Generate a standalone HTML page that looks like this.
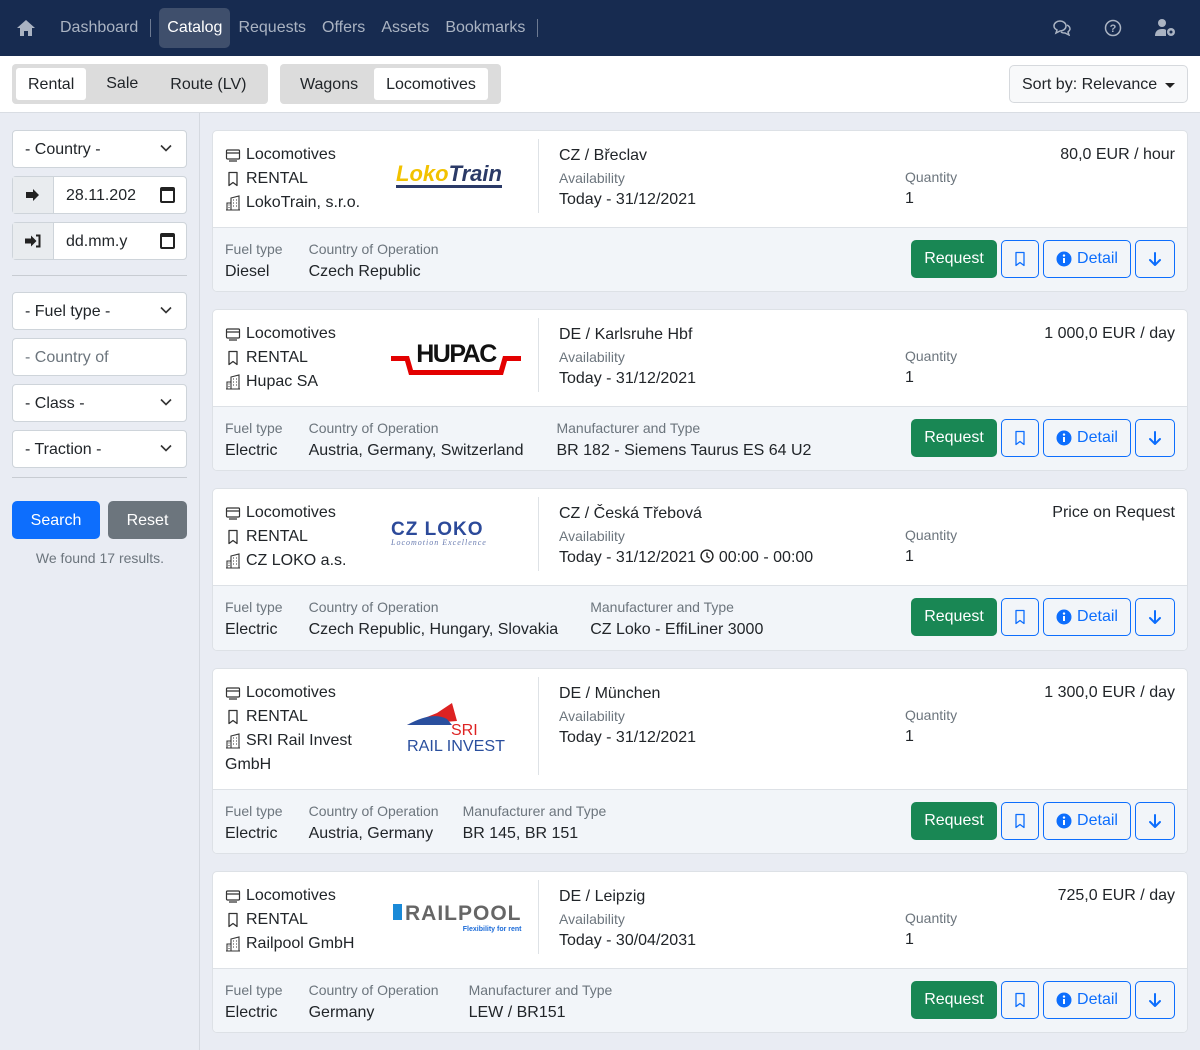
<!DOCTYPE html>
<html><head><meta charset="utf-8"><style>
*{box-sizing:border-box;margin:0;padding:0}
body{width:1200px;height:1050px;overflow:hidden;background:#e9ecf3;font-family:"Liberation Sans",Arial,sans-serif;color:#212529;font-size:16px}
.nav{height:56px;background:#172b50;display:flex;align-items:center;padding-left:16px;color:#aab3c2}
.nav .it{padding:0 8px;font-size:16px;line-height:40px}
.nav .act{background:#3f4f6c;color:#fff;border-radius:5px}
.sep{width:1px;height:18px;background:#6d7a92;margin:0 4px}
.tb{height:57px;background:#fff;border-bottom:1px solid #d9dde3;position:relative}
.grp{position:absolute;top:8px;height:40px;background:#dcdcdc;border-radius:4px;display:flex;padding:4px;gap:0}
.grp span{padding:0 12px;line-height:32px;border-radius:3px;font-size:16px;padding-top:1px}
.grp .on{background:#fff}
.sort{position:absolute;right:12px;top:9px;width:179px;height:38px;border:1px solid #d6d9dd;border-radius:5px;background:#f8f9fa;line-height:37px;padding-left:12px}
.side{position:absolute;left:0;top:113px;width:200px;height:937px;border-right:1px solid #d5d9e0}
.f{position:absolute;left:12px;width:175px;height:38px;background:#fff;border:1px solid #ced4da;border-radius:4px;line-height:37px;padding-left:12px}
.chev{position:absolute;right:14px;top:13px}
.hr{position:absolute;left:12px;width:175px;height:1px;background:#c8ccd2}
.ib{position:absolute;left:0;top:0;width:41px;height:36px;background:#e9ecef;border-right:1px solid #ced4da;display:flex;align-items:center;justify-content:center}
.cal{position:absolute;right:11px;top:10px;width:15px;height:16px;border:2px solid #222;border-top-width:4px;border-radius:2px}
.card{position:absolute;left:212px;width:976px;background:#fff;border:1px solid #dde1e6;border-radius:5px;overflow:hidden}
.top{position:relative}
.bot{background:#f2f5f9;border-top:1px solid #dde1e6;height:65px;position:relative}
.l{position:absolute;left:12px;top:12px;line-height:24px}
.l div{display:flex;align-items:center;gap:5px}
.vd{position:absolute;left:325px;top:8px;width:1px;background:#dee2e6}
.r{position:absolute;left:346px;top:13px}
.g{color:#6c757d;font-size:14px}
.q{position:absolute;left:692px;top:12px}
.pr{position:absolute;right:12px;top:15px}
.dets{position:absolute;left:12px;top:11px;display:flex;gap:26px}
.dets .g{line-height:20px}.dets div div:last-child{line-height:24px;margin-top:1px}
.btns{position:absolute;right:12px;top:12px;display:flex;gap:4px}
.b{height:38px;border:1px solid #0d6efd;border-radius:5px;color:#0d6efd;display:flex;align-items:center;justify-content:center;gap:5px}
.req{background:#198754;border-color:#198754;color:#fff;width:86px}
</style></head><body>
<svg width="0" height="0" style="position:absolute"><defs>
<symbol id="loc" viewBox="0 0 16 16"><g fill="none" stroke="#333" stroke-width="1.2"><rect x="1.5" y="3" width="13" height="9" rx="1"/><path d="M1.5 6h13M4 14h8"/></g></symbol>
<symbol id="bm" viewBox="0 0 16 16"><path d="M4 1.5h8v13l-4-3-4 3z" fill="none" stroke="currentColor" stroke-width="1.3" stroke-linejoin="round"/></symbol>
<symbol id="bld" viewBox="0 0 16 16"><g fill="none" stroke="#333" stroke-width="1.1"><path d="M1 15h14M2 15V8h4v7M6 15V3l8-2v14"/><path d="M8 5h1M11 5h1M8 8h1M11 8h1M8 11h1M11 11h1M3.5 10h1M3.5 12.5h1"/></g></symbol>
<symbol id="inf" viewBox="0 0 16 16"><circle cx="8" cy="8" r="7.5" fill="#0d6efd"/><rect x="7" y="7" width="2" height="5" fill="#fff"/><circle cx="8" cy="4.6" r="1.2" fill="#fff"/></symbol>
<symbol id="dn" viewBox="0 0 16 16"><path d="M8 2v12M3 9l5 5 5-5" fill="none" stroke="#0d6efd" stroke-width="2" stroke-linecap="round" stroke-linejoin="round"/></symbol>
<symbol id="ch" viewBox="0 0 12 8"><path d="M1 1.5l5 5 5-5" fill="none" stroke="#333" stroke-width="1.6"/></symbol>
</defs></svg>
<div class="nav">
<svg width="20" height="18" viewBox="0 0 20 18"><path d="M10 1L1 9h3v8h4v-5h4v5h4V9h3z" fill="#aab3c2"/></svg>
<span style="width:16px"></span><span class="it">Dashboard</span><span class="sep"></span>
<span class="it act" style="margin-left:4px">Catalog</span><span class="it">Requests</span><span class="it">Offers</span><span class="it">Assets</span><span class="it">Bookmarks</span><span class="sep"></span>
<svg style="position:absolute;left:1052px;top:19px" width="20" height="17" viewBox="0 0 20 17" fill="none" stroke="#aab3c2" stroke-width="1.5"><path d="M2 7c0-3 3-5 6-5s6 2 6 5-3 5-6 5l-4 2 1-3C3 10 2 9 2 7z"/><path d="M15 6c2 1 3 2 3 4 0 1-1 2-2 3l1 3-4-2c-1 0-3 0-4-1"/></svg>
<svg style="position:absolute;left:1104px;top:19px" width="18" height="18" viewBox="0 0 18 18"><circle cx="9" cy="9" r="7.5" fill="none" stroke="#aab3c2" stroke-width="1.5"/><text x="9" y="13" font-size="11" font-weight="bold" text-anchor="middle" fill="#aab3c2" font-family="Liberation Sans">?</text></svg>
<svg style="position:absolute;left:1155px;top:18px" width="22" height="19" viewBox="0 0 22 19" fill="#aab3c2"><circle cx="7" cy="5" r="4"/><path d="M0 18c0-5 3-7 7-7 2 0 3 0 4 1v6z"/><circle cx="16" cy="14" r="4"/><circle cx="16" cy="14" r="1.5" fill="#172b50"/></svg>
</div>
<div class="tb">
<div class="grp" style="left:12px;width:256px"><span class="on">Rental</span><span style="padding:0 20px">Sale</span><span>Route (LV)</span></div>
<div class="grp" style="left:280px;width:221px"><span style="padding:0 16px;padding-top:1px">Wagons</span><span class="on">Locomotives</span></div>
<div class="sort">Sort by: Relevance <span style="position:absolute;right:12px;top:17px;border:5px solid transparent;border-top:5px solid #222;border-bottom:0"></span></div>
</div>
<div class="side">
<div class="f" style="top:17px">- Country -<svg class="chev" width="12" height="8"><use href="#ch"/></svg></div>
<div class="f" style="top:63px;padding-left:53px">28.11.202<span class="ib"><svg width="16" height="14" viewBox="0 0 16 14"><path d="M1 4h7V1l6 6-6 6v-3H1z" fill="#222"/></svg></span><span class="cal"></span></div>
<div class="f" style="top:109px;padding-left:53px">dd.mm.y<span class="ib"><svg width="18" height="14" viewBox="0 0 18 14"><path d="M1 4.5h6V1.5l5.5 5.5L7 12.5v-3H1z" fill="#222"/><path d="M12 1.5h3.5v11H12" fill="none" stroke="#222" stroke-width="2"/></svg></span><span class="cal"></span></div>
<div class="hr" style="top:162px"></div>
<div class="f" style="top:179px">- Fuel type -<svg class="chev" width="12" height="8"><use href="#ch"/></svg></div>
<div class="f" style="top:225px;color:#6c757d">- Country of</div>
<div class="f" style="top:271px">- Class -<svg class="chev" width="12" height="8"><use href="#ch"/></svg></div>
<div class="f" style="top:317px">- Traction -<svg class="chev" width="12" height="8"><use href="#ch"/></svg></div>
<div class="hr" style="top:364px"></div>
<div style="position:absolute;left:12px;top:388px;width:88px;height:38px;background:#0d6efd;color:#fff;border-radius:5px;text-align:center;line-height:39px">Search</div>
<div style="position:absolute;left:108px;top:388px;width:79px;height:38px;background:#6c757d;color:#fff;border-radius:5px;text-align:center;line-height:39px">Reset</div>
<div class="g" style="position:absolute;left:0;width:200px;top:437px;text-align:center">We found 17 results.</div>
</div>

<div class="card" style="top:130px;height:162px"><div class="top" style="height:96px">
<div class="l"><div><svg width="16" height="16"><use href="#loc"/></svg>Locomotives</div><div><svg width="16" height="16" style="color:#333"><use href="#bm"/></svg>RENTAL</div><div><svg width="16" height="16"><use href="#bld"/></svg>LokoTrain, s.r.o.</div></div>
<div style="position:absolute;left:183px;top:32px;font:italic bold 22px 'Liberation Sans';color:#f2c200;border-bottom:3px solid #2b3a67;line-height:22px">Loko<span style="color:#2b3a67">Train</span></div>
<div class="vd" style="height:74px"></div>
<div class="r" style="line-height:24px"><div>CZ / Břeclav</div><div class="g" style="line-height:20px">Availability</div><div>Today - 31/12/2021</div></div>
<div class="q" style="top:36px"><div class="g" style="line-height:20px">Quantity</div><div style="line-height:24px">1</div></div>
<div class="pr">80,0 EUR / hour</div></div>
<div class="bot"><div class="dets"><div><div class="g">Fuel type</div><div>Diesel</div></div><div><div class="g">Country of Operation</div><div>Czech Republic</div></div></div>
<div class="btns"><div class="b req">Request</div><div class="b" style="width:38px"><svg width="16" height="16" style="color:#0d6efd"><use href="#bm"/></svg></div><div class="b" style="width:88px"><svg width="16" height="16"><use href="#inf"/></svg>Detail</div><div class="b" style="width:40px"><svg width="16" height="16"><use href="#dn"/></svg></div></div></div></div>

<div class="card" style="top:309px;height:162px"><div class="top" style="height:96px">
<div class="l"><div><svg width="16" height="16"><use href="#loc"/></svg>Locomotives</div><div><svg width="16" height="16" style="color:#333"><use href="#bm"/></svg>RENTAL</div><div><svg width="16" height="16"><use href="#bld"/></svg>Hupac SA</div></div>
<svg style="position:absolute;left:178px;top:28px" width="130" height="38" viewBox="0 0 130 38"><path d="M0 18h18l4 14h86l4-14h18v5h-14l-4 14H18l-4-14H0z" fill="#e30000"/><text x="65" y="24" font-size="25" font-weight="bold" text-anchor="middle" font-family="Liberation Sans" letter-spacing="-1.5" fill="#111">HUPAC</text></svg>
<div class="vd" style="height:74px"></div>
<div class="r" style="line-height:24px"><div>DE / Karlsruhe Hbf</div><div class="g" style="line-height:20px">Availability</div><div>Today - 31/12/2021</div></div>
<div class="q" style="top:36px"><div class="g" style="line-height:20px">Quantity</div><div style="line-height:24px">1</div></div>
<div class="pr">1 000,0 EUR / day</div></div>
<div class="bot"><div class="dets"><div><div class="g">Fuel type</div><div>Electric</div></div><div><div class="g">Country of Operation</div><div>Austria, Germany, Switzerland</div></div><div style="margin-left:7px"><div class="g">Manufacturer and Type</div><div>BR 182 - Siemens Taurus ES 64 U2</div></div></div>
<div class="btns"><div class="b req">Request</div><div class="b" style="width:38px"><svg width="16" height="16" style="color:#0d6efd"><use href="#bm"/></svg></div><div class="b" style="width:88px"><svg width="16" height="16"><use href="#inf"/></svg>Detail</div><div class="b" style="width:40px"><svg width="16" height="16"><use href="#dn"/></svg></div></div></div></div>

<div class="card" style="top:488px;height:163px"><div class="top" style="height:96px">
<div class="l"><div><svg width="16" height="16"><use href="#loc"/></svg>Locomotives</div><div><svg width="16" height="16" style="color:#333"><use href="#bm"/></svg>RENTAL</div><div><svg width="16" height="16"><use href="#bld"/></svg>CZ LOKO a.s.</div></div>
<div style="position:absolute;left:178px;top:30px;font:bold 19px 'Liberation Sans';color:#2c4a9a;letter-spacing:1px">CZ LOKO<div style="font:italic 8px 'Liberation Serif';color:#6a7cb0;text-align:right;margin-top:-3px">Locomotion Excellence</div></div>
<div class="vd" style="height:74px"></div>
<div class="r" style="line-height:24px"><div>CZ / Česká Třebová</div><div class="g" style="line-height:20px">Availability</div><div>Today - 31/12/2021 <svg width="14" height="14" viewBox="0 0 16 16" style="vertical-align:-1px"><circle cx="8" cy="8" r="6.8" fill="none" stroke="#222" stroke-width="1.6"/><path d="M8 4v4.5l3 2" fill="none" stroke="#222" stroke-width="1.6"/></svg> 00:00 - 00:00</div></div>
<div class="q" style="top:36px"><div class="g" style="line-height:20px">Quantity</div><div style="line-height:24px">1</div></div>
<div class="pr">Price on Request</div></div>
<div class="bot"><div class="dets"><div><div class="g">Fuel type</div><div>Electric</div></div><div><div class="g">Country of Operation</div><div>Czech Republic, Hungary, Slovakia</div></div><div style="margin-left:6px"><div class="g">Manufacturer and Type</div><div>CZ Loko - EffiLiner 3000</div></div></div>
<div class="btns"><div class="b req">Request</div><div class="b" style="width:38px"><svg width="16" height="16" style="color:#0d6efd"><use href="#bm"/></svg></div><div class="b" style="width:88px"><svg width="16" height="16"><use href="#inf"/></svg>Detail</div><div class="b" style="width:40px"><svg width="16" height="16"><use href="#dn"/></svg></div></div></div></div>

<div class="card" style="top:668px;height:186px"><div class="top" style="height:120px">
<div class="l"><div><svg width="16" height="16"><use href="#loc"/></svg>Locomotives</div><div><svg width="16" height="16" style="color:#333"><use href="#bm"/></svg>RENTAL</div><div><svg width="16" height="16"><use href="#bld"/></svg>SRI Rail Invest</div><div>GmbH</div></div>
<svg style="position:absolute;left:194px;top:34px" width="100" height="50" viewBox="0 0 100 50"><path d="M0 22 L30 10 L45 0 L50 18 Z" fill="#d22"/><path d="M0 22 Q25 8 40 16 L45 22 Z" fill="#2a4f9e"/><text x="44" y="32" font-size="16" fill="#d22" font-family="Liberation Sans">SRI</text><text x="0" y="48" font-size="16" fill="#2a4f9e" font-family="Liberation Sans" textLength="98" lengthAdjust="spacingAndGlyphs">RAIL INVEST</text></svg>
<div class="vd" style="height:98px"></div>
<div class="r" style="line-height:24px"><div>DE / München</div><div class="g" style="line-height:20px">Availability</div><div>Today - 31/12/2021</div></div>
<div class="q" style="top:36px"><div class="g" style="line-height:20px">Quantity</div><div style="line-height:24px">1</div></div>
<div class="pr">1 300,0 EUR / day</div></div>
<div class="bot"><div class="dets"><div><div class="g">Fuel type</div><div>Electric</div></div><div><div class="g">Country of Operation</div><div>Austria, Germany</div></div><div style="margin-left:-2px"><div class="g">Manufacturer and Type</div><div>BR 145, BR 151</div></div></div>
<div class="btns"><div class="b req">Request</div><div class="b" style="width:38px"><svg width="16" height="16" style="color:#0d6efd"><use href="#bm"/></svg></div><div class="b" style="width:88px"><svg width="16" height="16"><use href="#inf"/></svg>Detail</div><div class="b" style="width:40px"><svg width="16" height="16"><use href="#dn"/></svg></div></div></div></div>

<div class="card" style="top:871px;height:162px"><div class="top" style="height:96px">
<div class="l"><div><svg width="16" height="16"><use href="#loc"/></svg>Locomotives</div><div><svg width="16" height="16" style="color:#333"><use href="#bm"/></svg>RENTAL</div><div><svg width="16" height="16"><use href="#bld"/></svg>Railpool GmbH</div></div>
<div style="position:absolute;left:180px;top:30px;font:bold 21px 'Liberation Sans';color:#666;letter-spacing:1px"><span style="display:inline-block;width:9px;height:16px;background:#1a8ad8;margin-right:3px"></span>RAILPOOL<div style="font:bold 7px 'Liberation Sans';color:#1a6ad8;text-align:right;letter-spacing:0">Flexibility for rent</div></div>
<div class="vd" style="height:74px"></div>
<div class="r" style="line-height:24px"><div>DE / Leipzig</div><div class="g" style="line-height:20px">Availability</div><div>Today - 30/04/2031</div></div>
<div class="q" style="top:36px"><div class="g" style="line-height:20px">Quantity</div><div style="line-height:24px">1</div></div>
<div class="pr">725,0 EUR / day</div></div>
<div class="bot"><div class="dets"><div><div class="g">Fuel type</div><div>Electric</div></div><div style="width:134px"><div class="g">Country of Operation</div><div>Germany</div></div><div style="margin-left:0"><div class="g">Manufacturer and Type</div><div>LEW / BR151</div></div></div>
<div class="btns"><div class="b req">Request</div><div class="b" style="width:38px"><svg width="16" height="16" style="color:#0d6efd"><use href="#bm"/></svg></div><div class="b" style="width:88px"><svg width="16" height="16"><use href="#inf"/></svg>Detail</div><div class="b" style="width:40px"><svg width="16" height="16"><use href="#dn"/></svg></div></div></div></div>
</body></html>
